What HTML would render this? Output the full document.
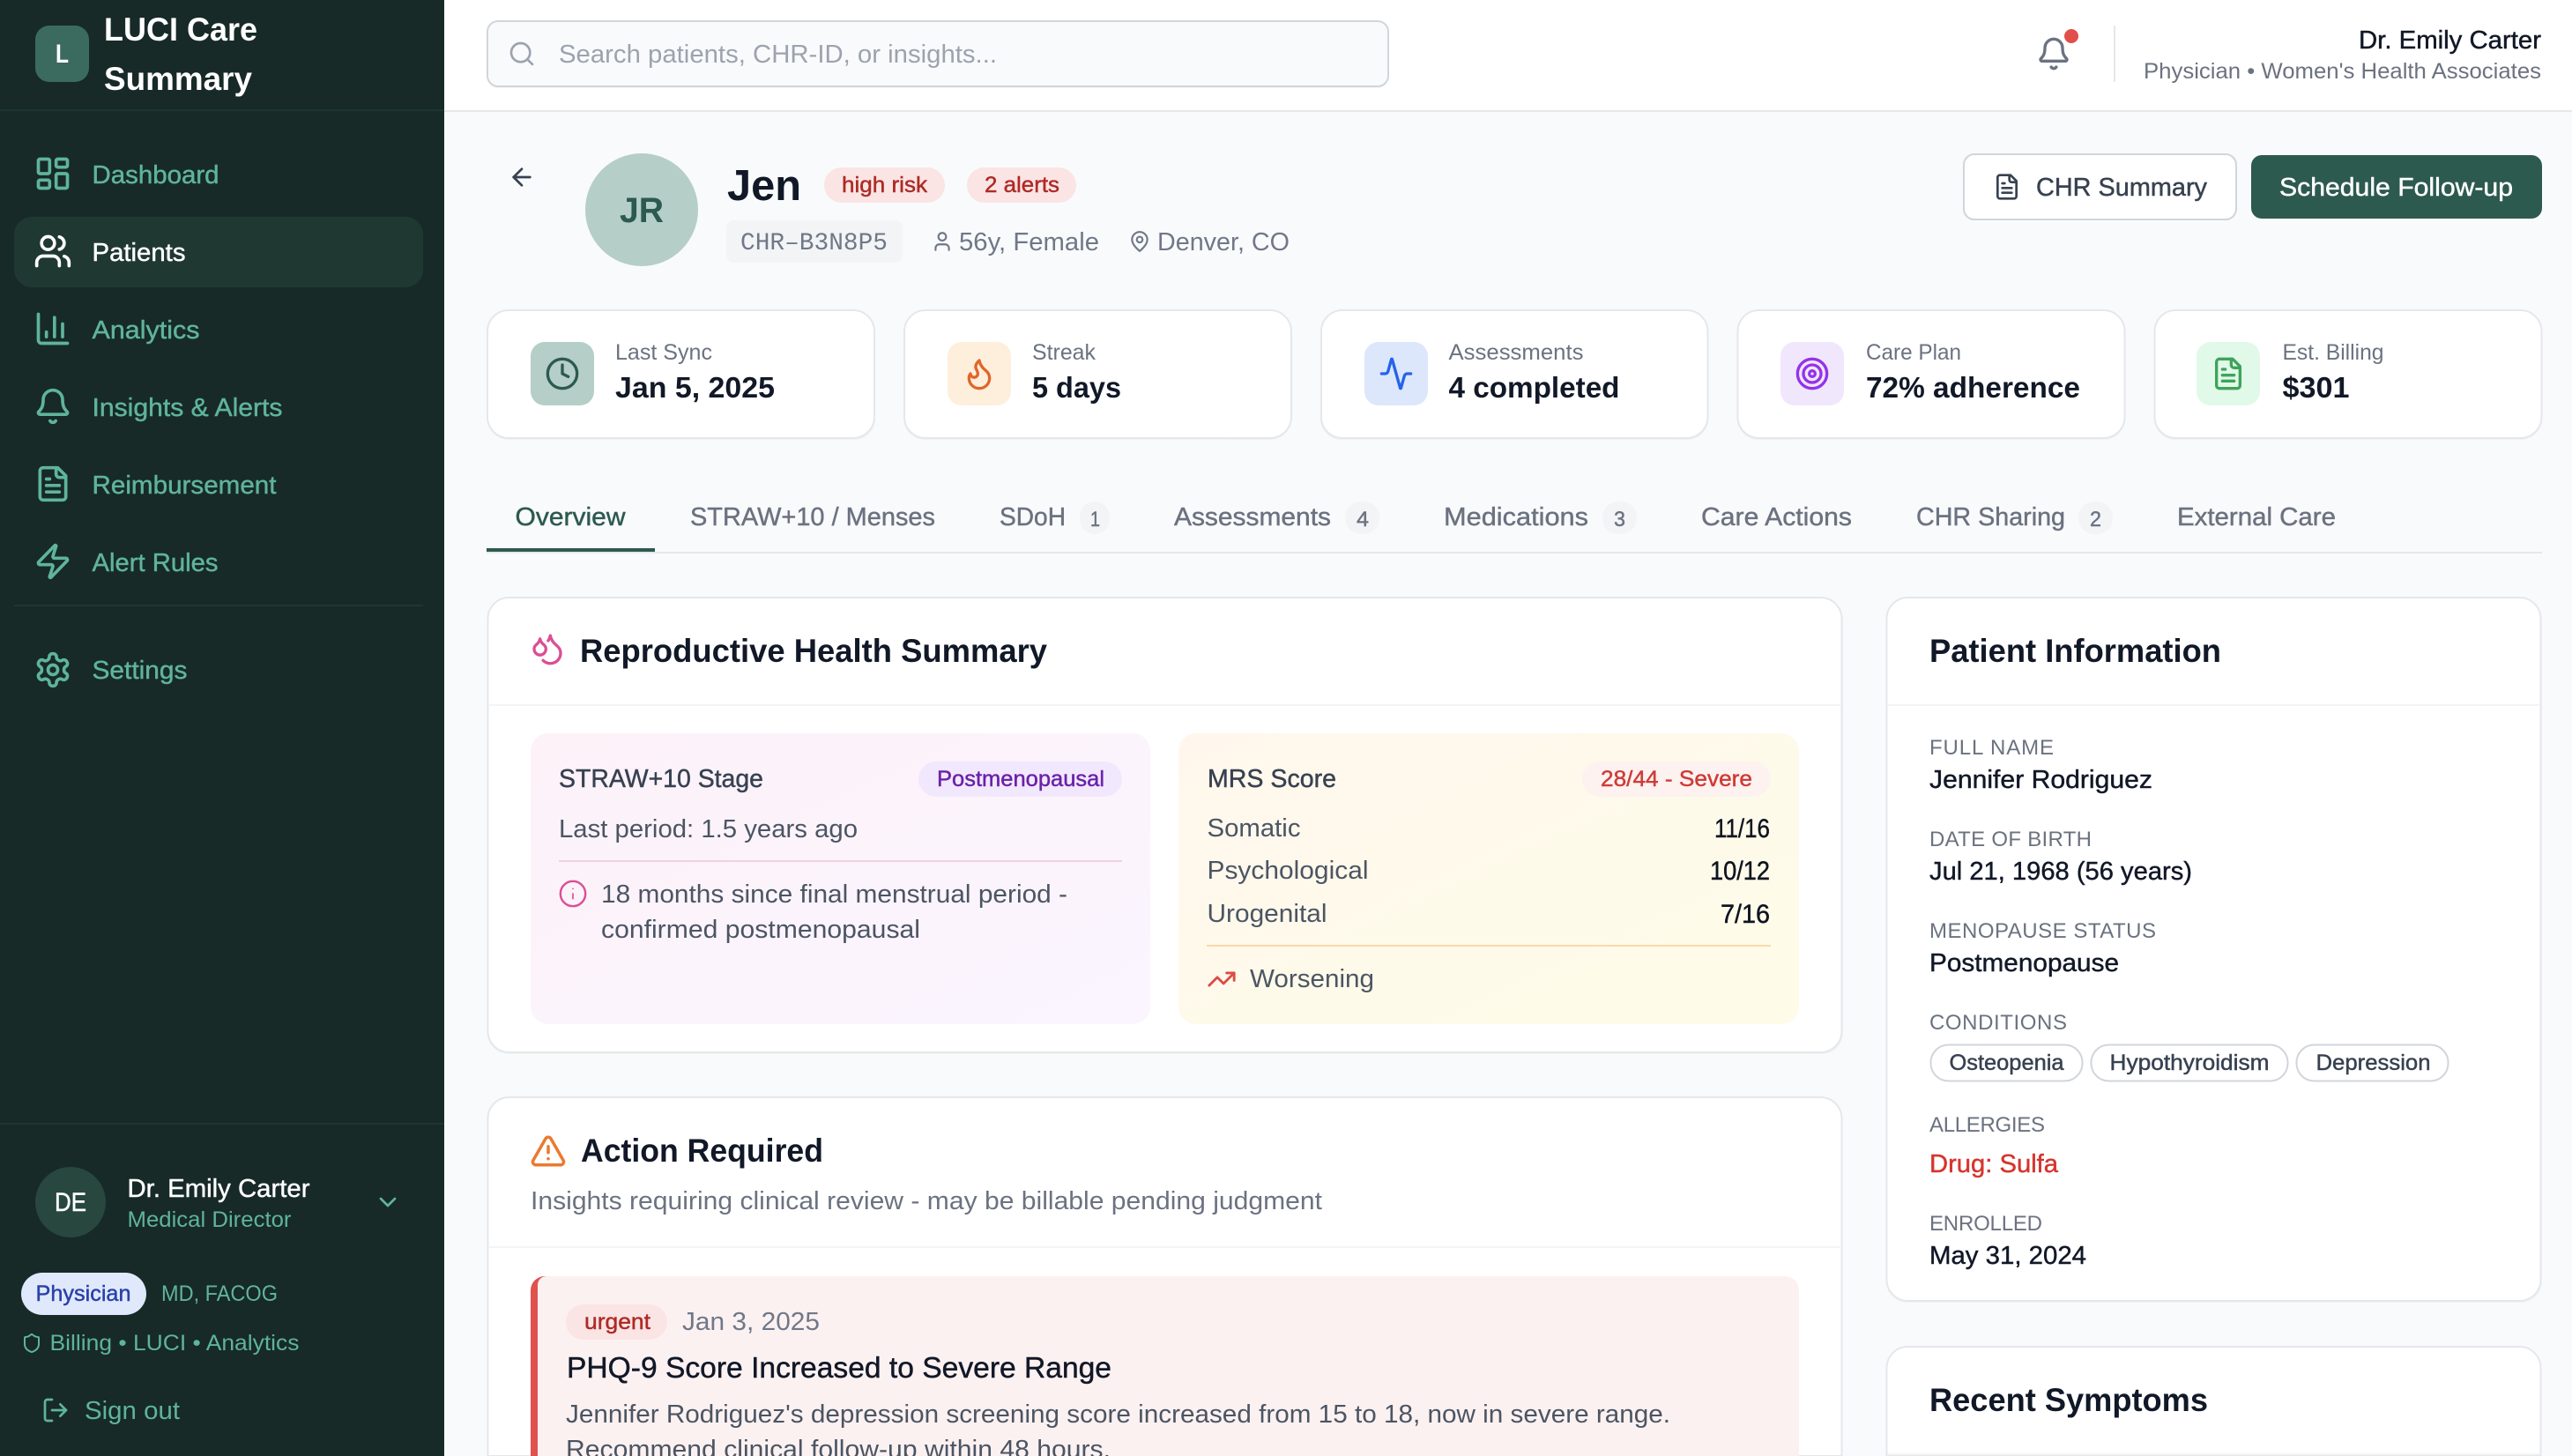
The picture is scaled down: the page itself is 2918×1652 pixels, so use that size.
<!DOCTYPE html>
<html lang="en"><head><meta charset="utf-8"><title>LUCI Care Summary</title>
<style>
html,body{margin:0;padding:0;width:2918px;height:1652px;overflow:hidden;background:#F9FAFB}
svg{display:block}
text{font-family:"Liberation Sans",Arial,sans-serif;fill:currentColor;white-space:pre}
text.mono{font-family:"Liberation Mono",monospace}
.m{stroke:currentColor;stroke-width:.45}
.b{font-weight:700}
.i{fill:none;stroke-width:2;stroke-linecap:round;stroke-linejoin:round}
</style></head><body>
<svg xmlns="http://www.w3.org/2000/svg" width="2918" height="1652" viewBox="0 0 2918 1652">
<defs>
<linearGradient id="gp" x1="0" y1="0" x2="1" y2="1"><stop offset="0" stop-color="#FDF2F8"/><stop offset="1" stop-color="#FAF5FF"/></linearGradient>
<linearGradient id="gy" x1="0" y1="0" x2="1" y2="1"><stop offset="0" stop-color="#FFF7ED"/><stop offset="1" stop-color="#FEFCE8"/></linearGradient>
</defs>
<rect width="2918" height="1652" fill="#F9FAFB"/>

<!-- Top bar -->
<rect x="504" width="2414" height="125" fill="#fff"/>
<rect x="504" y="125" width="2414" height="2" fill="#E5E7EB"/>
<rect x="553" y="26" width="1022" height="74" rx="12" fill="#000" opacity=".03"/>
<rect x="553" y="24" width="1022" height="74" rx="12" fill="#F9FAFB" stroke="#D1D5DB" stroke-width="2"/>
<g class="i" stroke="#9CA3AF" transform="translate(576,45) scale(1.333) "><circle cx="11" cy="11" r="8"/><path d="m21 21-4.3-4.3"/></g>
<text x="634" y="71" font-size="29" textLength="497" lengthAdjust="spacingAndGlyphs" color="#9CA3AF">Search patients, CHR-ID, or insights...</text>
<g class="i" stroke="#6B7280" stroke-width="2" transform="translate(2310,41) scale(1.667)"><path d="M10.268 21a2 2 0 0 0 3.464 0"/><path d="M3.262 15.326A1 1 0 0 0 4 17h16a1 1 0 0 0 .74-1.673C19.41 13.956 18 12.499 18 8A6 6 0 0 0 6 8c0 4.499-1.411 5.956-2.738 7.326"/></g>
<circle cx="2350" cy="41" r="8" fill="#E04F4A"/>
<rect x="2398" y="29" width="2" height="64" fill="#E5E7EB"/>
<text class="m" x="2676" y="55" font-size="29" textLength="207" lengthAdjust="spacingAndGlyphs" color="#111827">Dr. Emily Carter</text>
<text x="2432" y="89" font-size="25" textLength="451" lengthAdjust="spacingAndGlyphs" color="#6B7280">Physician • Women's Health Associates</text>

<!-- Sidebar -->
<rect width="504" height="1652" fill="#172A27"/>
<rect y="124" width="504" height="2" fill="#1F3630"/>
<rect x="40" y="29" width="61" height="64" rx="16" fill="#3B6B5E"/>
<text class="b" x="63" y="71" font-size="30" textLength="15" lengthAdjust="spacingAndGlyphs" color="#fff">L</text>
<text class="b" x="118" y="46" font-size="37" textLength="174" lengthAdjust="spacingAndGlyphs" color="#fff">LUCI Care</text>
<text class="b" x="118" y="102" font-size="37" textLength="168" lengthAdjust="spacingAndGlyphs" color="#fff">Summary</text>

<rect x="16" y="246" width="464" height="80" rx="20" fill="#203832"/>
<g class="i" stroke="#5FB49A" stroke-width="1.8" transform="translate(38,175) scale(1.833)"><rect x="3" y="3" width="7" height="9" rx="1"/><rect x="14" y="3" width="7" height="5" rx="1"/><rect x="14" y="12" width="7" height="9" rx="1"/><rect x="3" y="16" width="7" height="5" rx="1"/></g>
<text class="m" x="104.500" y="208" font-size="29" textLength="144" lengthAdjust="spacingAndGlyphs" color="#5FB49A">Dashboard</text>
<g class="i" stroke="#fff" stroke-width="1.8" transform="translate(38,263) scale(1.833)"><path d="M16 21v-2a4 4 0 0 0-4-4H6a4 4 0 0 0-4 4v2"/><circle cx="9" cy="7" r="4"/><path d="M22 21v-2a4 4 0 0 0-3-3.87"/><path d="M16 3.13a4 4 0 0 1 0 7.75"/></g>
<text class="m" x="104.500" y="296" font-size="29" textLength="106" lengthAdjust="spacingAndGlyphs" color="#fff">Patients</text>
<g class="i" stroke="#5FB49A" stroke-width="1.8" transform="translate(38,351) scale(1.833)"><path d="M3 3v16a2 2 0 0 0 2 2h16"/><path d="M18 17V9"/><path d="M13 17V5"/><path d="M8 17v-3"/></g>
<text class="m" x="104.500" y="384" font-size="29" textLength="122" lengthAdjust="spacingAndGlyphs" color="#5FB49A">Analytics</text>
<g class="i" stroke="#5FB49A" stroke-width="1.8" transform="translate(38,439) scale(1.833)"><path d="M10.268 21a2 2 0 0 0 3.464 0"/><path d="M3.262 15.326A1 1 0 0 0 4 17h16a1 1 0 0 0 .74-1.673C19.41 13.956 18 12.499 18 8A6 6 0 0 0 6 8c0 4.499-1.411 5.956-2.738 7.326"/></g>
<text class="m" x="104.500" y="472" font-size="29" textLength="216" lengthAdjust="spacingAndGlyphs" color="#5FB49A">Insights &amp; Alerts</text>
<g class="i" stroke="#5FB49A" stroke-width="1.8" transform="translate(38,527) scale(1.833)"><path d="M15 2H6a2 2 0 0 0-2 2v16a2 2 0 0 0 2 2h12a2 2 0 0 0 2-2V7Z"/><path d="M14 2v4a2 2 0 0 0 2 2h4"/><path d="M10 9H8"/><path d="M16 13H8"/><path d="M16 17H8"/></g>
<text class="m" x="104.500" y="560" font-size="29" textLength="209" lengthAdjust="spacingAndGlyphs" color="#5FB49A">Reimbursement</text>
<g class="i" stroke="#5FB49A" stroke-width="1.8" transform="translate(38,615) scale(1.833)"><path d="M4 14a1 1 0 0 1-.78-1.63l9.9-10.2a.5.5 0 0 1 .86.46l-1.92 6.02A1 1 0 0 0 13 10h7a1 1 0 0 1 .78 1.63l-9.9 10.2a.5.5 0 0 1-.86-.46l1.92-6.02A1 1 0 0 0 11 14z"/></g>
<text class="m" x="104.500" y="648" font-size="29" textLength="143" lengthAdjust="spacingAndGlyphs" color="#5FB49A">Alert Rules</text>
<rect x="16" y="686" width="464" height="2" fill="#1F3630"/>
<g class="i" stroke="#5FB49A" stroke-width="1.8" transform="translate(38,738) scale(1.833)"><path d="M12.22 2h-.44a2 2 0 0 0-2 2v.18a2 2 0 0 1-1 1.73l-.43.25a2 2 0 0 1-2 0l-.15-.08a2 2 0 0 0-2.73.73l-.22.38a2 2 0 0 0 .73 2.73l.15.1a2 2 0 0 1 1 1.72v.51a2 2 0 0 1-1 1.74l-.15.09a2 2 0 0 0-.73 2.73l.22.38a2 2 0 0 0 2.73.73l.15-.08a2 2 0 0 1 2 0l.43.25a2 2 0 0 1 1 1.73V20a2 2 0 0 0 2 2h.44a2 2 0 0 0 2-2v-.18a2 2 0 0 1 1-1.73l.43-.25a2 2 0 0 1 2 0l.15.08a2 2 0 0 0 2.73-.73l.22-.39a2 2 0 0 0-.73-2.73l-.15-.08a2 2 0 0 1-1-1.74v-.5a2 2 0 0 1 1-1.74l.15-.09a2 2 0 0 0 .73-2.73l-.22-.38a2 2 0 0 0-2.73-.73l-.15.08a2 2 0 0 1-2 0l-.43-.25a2 2 0 0 1-1-1.73V4a2 2 0 0 0-2-2z"/><circle cx="12" cy="12" r="3"/></g>
<text class="m" x="104.500" y="770" font-size="29" textLength="108" lengthAdjust="spacingAndGlyphs" color="#5FB49A">Settings</text>

<rect y="1274" width="504" height="2" fill="#1F3630"/>
<circle cx="80" cy="1364" r="40" fill="#27473F"/>
<text class="m" x="62" y="1374" font-size="30" textLength="36" lengthAdjust="spacingAndGlyphs" color="#fff">DE</text>
<text class="m" x="144.500" y="1358" font-size="29" textLength="207" lengthAdjust="spacingAndGlyphs" color="#fff">Dr. Emily Carter</text>
<text x="144.500" y="1392" font-size="25" textLength="186" lengthAdjust="spacingAndGlyphs" color="#5FB49A">Medical Director</text>
<g class="i" stroke="#5FB49A" transform="translate(424,1348) scale(1.333)"><path d="m6 9 6 6 6-6"/></g>
<rect x="24" y="1444" width="142" height="48" rx="24" fill="#DFE9FB"/>
<text class="m" x="40.500" y="1476" font-size="25" textLength="108" lengthAdjust="spacingAndGlyphs" color="#2A40A8">Physician</text>
<text x="183" y="1476" font-size="25" textLength="132" lengthAdjust="spacingAndGlyphs" color="#5FB49A">MD, FACOG</text>
<g class="i" stroke="#5FB49A" transform="translate(24,1512) scale(1)"><path d="M20 13c0 5-3.5 7.5-7.66 8.95a1 1 0 0 1-.67-.01C7.5 20.5 4 18 4 13V6a1 1 0 0 1 1-1c2 0 4.5-1.2 6.24-2.72a1.17 1.17 0 0 1 1.52 0C14.51 3.81 17 5 19 5a1 1 0 0 1 1 1z"/></g>
<text x="56.500" y="1532" font-size="25" textLength="283" lengthAdjust="spacingAndGlyphs" color="#5FB49A">Billing • LUCI • Analytics</text>
<g class="i" stroke="#5FB49A" transform="translate(47,1584) scale(1.333)"><path d="M9 21H5a2 2 0 0 1-2-2V5a2 2 0 0 1 2-2h4"/><path d="m16 17 5-5-5-5"/><path d="M21 12H9"/></g>
<text x="96" y="1610" font-size="29" textLength="108" lengthAdjust="spacingAndGlyphs" color="#5FB49A">Sign out</text>

<!-- Patient header -->
<g class="i" stroke="#374151" transform="translate(576,185) scale(1.333)"><path d="m12 19-7-7 7-7"/><path d="M19 12H5"/></g>
<circle cx="728" cy="238" r="64" fill="#B5CEC8"/>
<text class="b" x="703" y="252" font-size="40" textLength="50" lengthAdjust="spacingAndGlyphs" color="#2D5A4E">JR</text>
<text class="b" x="825" y="227" font-size="49" textLength="84" lengthAdjust="spacingAndGlyphs" color="#111827">Jen</text>
<rect x="935" y="190" width="137" height="40" rx="20" fill="#FAE4E4"/>
<text class="m" x="955" y="218" font-size="25" textLength="97" lengthAdjust="spacingAndGlyphs" color="#AE2A25">high risk</text>
<rect x="1097" y="190" width="124" height="40" rx="20" fill="#FAE4E4"/>
<text class="m" x="1117" y="218" font-size="25" textLength="85" lengthAdjust="spacingAndGlyphs" color="#AE2A25">2 alerts</text>
<rect x="824" y="250" width="200" height="48" rx="8" fill="#F3F4F6"/>
<text class="mono" x="840" y="283" font-size="28" textLength="167" lengthAdjust="spacingAndGlyphs" color="#6F7888">CHR–B3N8P5</text>
<g class="i" stroke="#6F7888" transform="translate(1056,261) scale(1.083)"><path d="M19 21v-2a4 4 0 0 0-4-4H9a4 4 0 0 0-4 4v2"/><circle cx="12" cy="7" r="4"/></g>
<text x="1088" y="284" font-size="29" textLength="159" lengthAdjust="spacingAndGlyphs" color="#6F7888">56y, Female</text>
<g class="i" stroke="#6F7888" transform="translate(1280,261) scale(1.083)"><path d="M20 10c0 6-8 12-8 12s-8-6-8-12a8 8 0 0 1 16 0Z"/><circle cx="12" cy="10" r="3"/></g>
<text x="1313" y="284" font-size="29" textLength="150" lengthAdjust="spacingAndGlyphs" color="#6F7888">Denver, CO</text>

<rect x="2228" y="175" width="309" height="74" rx="12" fill="#fff" stroke="#D1D5DB" stroke-width="2"/>
<g class="i" stroke="#374151" transform="translate(2261,196) scale(1.333)"><path d="M15 2H6a2 2 0 0 0-2 2v16a2 2 0 0 0 2 2h12a2 2 0 0 0 2-2V7Z"/><path d="M14 2v4a2 2 0 0 0 2 2h4"/><path d="M10 9H8"/><path d="M16 13H8"/><path d="M16 17H8"/></g>
<text class="m" x="2310" y="222" font-size="29" textLength="194" lengthAdjust="spacingAndGlyphs" color="#374151">CHR Summary</text>
<rect x="2554" y="176" width="330" height="72" rx="12" fill="#2D5A4E"/>
<text class="m" x="2586" y="222" font-size="29" textLength="265" lengthAdjust="spacingAndGlyphs" color="#fff">Schedule Follow-up</text>

<!-- Stat cards -->
<g fill="#000" opacity=".035"><rect x="553" y="354" width="440" height="145" rx="24"/><rect x="1025" y="354" width="440" height="145" rx="24"/><rect x="1498" y="354" width="440" height="145" rx="24"/><rect x="1971" y="354" width="440" height="145" rx="24"/><rect x="2444" y="354" width="440" height="145" rx="24"/></g>
<g fill="#fff" stroke="#E5E7EB" stroke-width="2"><rect x="553" y="352" width="439" height="145" rx="24"/><rect x="1026" y="352" width="439" height="145" rx="24"/><rect x="1499" y="352" width="438.500" height="145" rx="24"/><rect x="1971.500" y="352" width="439" height="145" rx="24"/><rect x="2444.500" y="352" width="439" height="145" rx="24"/></g>
<rect x="602" y="388" width="72" height="72" rx="16" fill="#B5CEC8"/>
<g class="i" stroke="#2D5A4E" transform="translate(618,404) scale(1.667)"><circle cx="12" cy="12" r="10"/><polyline points="12 6 12 12 16 14"/></g>
<text x="698" y="408" font-size="25" textLength="110" lengthAdjust="spacingAndGlyphs" color="#6B7280">Last Sync</text>
<text class="b" x="698" y="451" font-size="33" textLength="181" lengthAdjust="spacingAndGlyphs" color="#111827">Jan 5, 2025</text>
<rect x="1075" y="388" width="72" height="72" rx="16" fill="#FDEFDC"/>
<g class="i" stroke="#E0662A" transform="translate(1091,404) scale(1.667)"><path d="M8.5 14.5A2.5 2.5 0 0 0 11 12c0-1.38-.5-2-1-3-1.072-2.143-.224-4.054 2-6 .5 2.5 2 4.9 4 6.5 2 1.6 3 3.5 3 5.5a7 7 0 1 1-14 0c0-1.153.433-2.294 1-3a2.5 2.5 0 0 0 2.5 2.5z"/></g>
<text x="1171" y="408" font-size="25" textLength="72" lengthAdjust="spacingAndGlyphs" color="#6B7280">Streak</text>
<text class="b" x="1171" y="451" font-size="33" textLength="101" lengthAdjust="spacingAndGlyphs" color="#111827">5 days</text>
<rect x="1548" y="388" width="72" height="72" rx="16" fill="#DCE7FC"/>
<g class="i" stroke="#2563EB" transform="translate(1564,404) scale(1.667)"><path d="M22 12h-2.48a2 2 0 0 0-1.93 1.46l-2.35 8.36a.25.25 0 0 1-.48 0L9.24 2.18a.25.25 0 0 0-.48 0l-2.35 8.36A2 2 0 0 1 4.49 12H2"/></g>
<text x="1643.500" y="408" font-size="25" textLength="153" lengthAdjust="spacingAndGlyphs" color="#6B7280">Assessments</text>
<text class="b" x="1643.500" y="451" font-size="33" textLength="194" lengthAdjust="spacingAndGlyphs" color="#111827">4 completed</text>
<rect x="2020" y="388" width="72" height="72" rx="16" fill="#F1E7FD"/>
<g class="i" stroke="#9333EA" transform="translate(2036,404) scale(1.667)"><circle cx="12" cy="12" r="10"/><circle cx="12" cy="12" r="6"/><circle cx="12" cy="12" r="2"/></g>
<text x="2117" y="408" font-size="25" textLength="108" lengthAdjust="spacingAndGlyphs" color="#6B7280">Care Plan</text>
<text class="b" x="2117" y="451" font-size="33" textLength="243" lengthAdjust="spacingAndGlyphs" color="#111827">72% adherence</text>
<rect x="2492" y="388" width="72" height="72" rx="16" fill="#E1F9E9"/>
<g class="i" stroke="#3FA35A" transform="translate(2508,404) scale(1.667)"><path d="M15 2H6a2 2 0 0 0-2 2v16a2 2 0 0 0 2 2h12a2 2 0 0 0 2-2V7Z"/><path d="M14 2v4a2 2 0 0 0 2 2h4"/><path d="M10 9H8"/><path d="M16 13H8"/><path d="M16 17H8"/></g>
<text x="2589.500" y="408" font-size="25" textLength="115" lengthAdjust="spacingAndGlyphs" color="#6B7280">Est. Billing</text>
<text class="b" x="2589.500" y="451" font-size="33" textLength="76" lengthAdjust="spacingAndGlyphs" color="#111827">$301</text>

<!-- Tabs -->
<rect x="552" y="626" width="2332" height="2" fill="#E5E7EB"/>
<rect x="552" y="622" width="191" height="4" fill="#2D5A4E"/>
<text class="m" x="584.500" y="596" font-size="29" textLength="125" lengthAdjust="spacingAndGlyphs" color="#2D5A4E">Overview</text>
<text class="m" x="783" y="596" font-size="29" textLength="278" lengthAdjust="spacingAndGlyphs" color="#6B7280">STRAW+10 / Menses</text>
<text class="m" x="1134" y="596" font-size="29" textLength="75" lengthAdjust="spacingAndGlyphs" color="#6B7280">SDoH</text>
<rect x="1225" y="569" width="34" height="37" rx="17" fill="#F3F4F6"/>
<text class="m" x="1237" y="597" font-size="24" textLength="11" lengthAdjust="spacingAndGlyphs" color="#6B7280">1</text>
<text class="m" x="1332" y="596" font-size="29" textLength="178" lengthAdjust="spacingAndGlyphs" color="#6B7280">Assessments</text>
<rect x="1526" y="569" width="39" height="37" rx="18" fill="#F3F4F6"/>
<text class="m" x="1539" y="597" font-size="24" textLength="14" lengthAdjust="spacingAndGlyphs" color="#6B7280">4</text>
<text class="m" x="1638" y="596" font-size="29" textLength="164" lengthAdjust="spacingAndGlyphs" color="#6B7280">Medications</text>
<rect x="1818" y="569" width="39" height="37" rx="18" fill="#F3F4F6"/>
<text class="m" x="1831" y="597" font-size="24" textLength="13" lengthAdjust="spacingAndGlyphs" color="#6B7280">3</text>
<text class="m" x="1930" y="596" font-size="29" textLength="171" lengthAdjust="spacingAndGlyphs" color="#6B7280">Care Actions</text>
<text class="m" x="2174" y="596" font-size="29" textLength="169" lengthAdjust="spacingAndGlyphs" color="#6B7280">CHR Sharing</text>
<rect x="2358" y="569" width="39" height="37" rx="18" fill="#F3F4F6"/>
<text class="m" x="2371" y="597" font-size="24" textLength="13" lengthAdjust="spacingAndGlyphs" color="#6B7280">2</text>
<text class="m" x="2470" y="596" font-size="29" textLength="180" lengthAdjust="spacingAndGlyphs" color="#6B7280">External Care</text>

<!-- Reproductive Health Summary -->
<rect x="553" y="680" width="1538" height="516" rx="24" fill="#000" opacity=".03"/>
<rect x="553.500" y="678" width="1536" height="516" rx="24" fill="#fff" stroke="#E5E7EB" stroke-width="2"/>
<rect x="555" y="799" width="1534" height="2" fill="#F3F4F6"/>
<g class="i" stroke="#DB4F93" stroke-width="2" transform="translate(601,716) scale(1.667)"><path d="M7 16.3c2.2 0 4-1.83 4-4.05 0-1.16-.57-2.26-1.71-3.19S7.29 6.75 7 5.3c-.29 1.45-1.14 2.84-2.29 3.76S3 11.1 3 12.25c0 2.22 1.8 4.05 4 4.05z"/><path d="M12.56 6.6A10.97 10.97 0 0 0 14 3.02c.5 2.5 2 4.9 4 6.5s3 3.5 3 5.5a6.98 6.98 0 0 1-11.91 4.97"/></g>
<text class="b" x="658" y="751" font-size="37" textLength="530" lengthAdjust="spacingAndGlyphs" color="#111827">Reproductive Health Summary</text>

<rect x="602" y="832" width="703" height="330" rx="20" fill="url(#gp)"/>
<text class="m" x="634" y="893" font-size="29" textLength="232" lengthAdjust="spacingAndGlyphs" color="#374151">STRAW+10 Stage</text>
<rect x="1042" y="864" width="231" height="40" rx="20" fill="#F1E8FD"/>
<text class="m" x="1063" y="892" font-size="25" textLength="190" lengthAdjust="spacingAndGlyphs" color="#6B21A8">Postmenopausal</text>
<text x="634" y="950" font-size="29" textLength="339" lengthAdjust="spacingAndGlyphs" color="#4B5563">Last period: 1.5 years ago</text>
<rect x="634" y="976" width="639" height="2" fill="#F3D0E3"/>
<g class="i" stroke="#DB4F93" transform="translate(633,997) scale(1.417)"><circle cx="12" cy="12" r="10" stroke-width="1.7"/><path d="M12 16v-4" stroke-width="1.2"/><path d="M12 8h.01" stroke-width="1.2"/></g>
<text x="682" y="1024" font-size="29" textLength="529" lengthAdjust="spacingAndGlyphs" color="#4B5563">18 months since final menstrual period -</text>
<text x="682" y="1064" font-size="29" textLength="362" lengthAdjust="spacingAndGlyphs" color="#4B5563">confirmed postmenopausal</text>

<rect x="1337" y="832" width="704" height="330" rx="20" fill="url(#gy)"/>
<text class="m" x="1370" y="893" font-size="29" textLength="146" lengthAdjust="spacingAndGlyphs" color="#374151">MRS Score</text>
<rect x="1795" y="864" width="214" height="40" rx="20" fill="#FDF2F0"/>
<text class="m" x="1816" y="892" font-size="25" textLength="172" lengthAdjust="spacingAndGlyphs" color="#CF3B36">28/44 - Severe</text>
<text x="1369.500" y="949" font-size="29" textLength="106" lengthAdjust="spacingAndGlyphs" color="#4B5563">Somatic</text>
<text class="m" x="1945" y="950" font-size="30" textLength="63" lengthAdjust="spacingAndGlyphs" color="#0F1420">11/16</text>
<text x="1369.500" y="997" font-size="29" textLength="183" lengthAdjust="spacingAndGlyphs" color="#4B5563">Psychological</text>
<text class="m" x="1940" y="998" font-size="30" textLength="68" lengthAdjust="spacingAndGlyphs" color="#0F1420">10/12</text>
<text x="1369.500" y="1046" font-size="29" textLength="136" lengthAdjust="spacingAndGlyphs" color="#4B5563">Urogenital</text>
<text class="m" x="1952" y="1047" font-size="30" textLength="56" lengthAdjust="spacingAndGlyphs" color="#0F1420">7/16</text>
<rect x="1369" y="1072" width="640" height="2" fill="#F9D9A8"/>
<g class="i" stroke="#DC4B46" transform="translate(1369,1094) scale(1.417)"><path d="M22 7 13.5 15.5 8.5 10.5 2 17"/><path d="M16 7h6v6"/></g>
<text x="1418" y="1120" font-size="29" textLength="141" lengthAdjust="spacingAndGlyphs" color="#4B5563">Worsening</text>

<!-- Action Required -->
<path d="M553.500 1652V1269a24 24 0 0 1 24-24H2065.500a24 24 0 0 1 24 24V1652Z" fill="#fff" stroke="#E5E7EB" stroke-width="2"/>
<rect x="555" y="1414" width="1534" height="2" fill="#F3F4F6"/>
<g class="i" stroke="#EA7A2F" transform="translate(601,1285) scale(1.75)" stroke-width="1.9"><path d="m21.73 18-8-14a2 2 0 0 0-3.48 0l-8 14A2 2 0 0 0 4 21h16a2 2 0 0 0 1.73-3"/><path d="M12 9v4"/><path d="M12 17h.01"/></g>
<text class="b" x="659" y="1318" font-size="37" textLength="275" lengthAdjust="spacingAndGlyphs" color="#111827">Action Required</text>
<text x="602" y="1372" font-size="29" textLength="898" lengthAdjust="spacingAndGlyphs" color="#6B7280">Insights requiring clinical review - may be billable pending judgment</text>
<path d="M602 1652V1464a16 16 0 0 1 16-16h24V1652Z" fill="#DF524E"/>
<path d="M610 1652V1458a10 10 0 0 1 10-10H2025a16 16 0 0 1 16 16V1652Z" fill="#FCF1F1"/>
<rect x="642" y="1480" width="115" height="40" rx="20" fill="#FAE4E4"/>
<text class="m" x="663" y="1508" font-size="25" textLength="75" lengthAdjust="spacingAndGlyphs" color="#AE2A25">urgent</text>
<text x="774" y="1509" font-size="29" textLength="156" lengthAdjust="spacingAndGlyphs" color="#6F7888">Jan 3, 2025</text>
<text class="m" x="643" y="1563" font-size="33" textLength="618" lengthAdjust="spacingAndGlyphs" color="#111827">PHQ-9 Score Increased to Severe Range</text>
<text x="642" y="1614" font-size="29" textLength="1253" lengthAdjust="spacingAndGlyphs" color="#4B5563">Jennifer Rodriguez's depression screening score increased from 15 to 18, now in severe range.</text>
<text x="642" y="1654" font-size="29" textLength="618" lengthAdjust="spacingAndGlyphs" color="#4B5563">Recommend clinical follow-up within 48 hours.</text>

<!-- Patient Information -->
<rect x="2140" y="680" width="744" height="798" rx="24" fill="#000" opacity=".03"/>
<rect x="2140.500" y="678" width="742" height="798" rx="24" fill="#fff" stroke="#E5E7EB" stroke-width="2"/>
<rect x="2142" y="799" width="740" height="2" fill="#F3F4F6"/>
<text class="b" x="2189" y="751" font-size="37" textLength="331" lengthAdjust="spacingAndGlyphs" color="#111827">Patient Information</text>
<text x="2189" y="856" font-size="24" textLength="141" lengthAdjust="spacing" color="#6B7280">FULL NAME</text>
<text class="m" x="2189" y="894" font-size="29" textLength="253" lengthAdjust="spacingAndGlyphs" color="#111827">Jennifer Rodriguez</text>
<text x="2189" y="960" font-size="24" textLength="184" lengthAdjust="spacing" color="#6B7280">DATE OF BIRTH</text>
<text class="m" x="2189" y="998" font-size="29" textLength="298" lengthAdjust="spacingAndGlyphs" color="#111827">Jul 21, 1968 (56 years)</text>
<text x="2189" y="1064" font-size="24" textLength="257" lengthAdjust="spacing" color="#6B7280">MENOPAUSE STATUS</text>
<text class="m" x="2189" y="1102" font-size="29" textLength="215" lengthAdjust="spacingAndGlyphs" color="#111827">Postmenopause</text>
<text x="2189" y="1168" font-size="24" textLength="156" lengthAdjust="spacing" color="#6B7280">CONDITIONS</text>
<g fill="#fff" stroke="#D1D5DB" stroke-width="2"><rect x="2190.500" y="1185.500" width="172" height="41" rx="20"/><rect x="2372.500" y="1185.500" width="223" height="41" rx="20"/><rect x="2605.500" y="1185.500" width="172" height="41" rx="20"/></g>
<text class="m" x="2211.500" y="1214" font-size="25" textLength="130" lengthAdjust="spacingAndGlyphs" color="#374151">Osteopenia</text>
<text class="m" x="2393.500" y="1214" font-size="25" textLength="181" lengthAdjust="spacingAndGlyphs" color="#374151">Hypothyroidism</text>
<text class="m" x="2627.500" y="1214" font-size="25" textLength="130" lengthAdjust="spacingAndGlyphs" color="#374151">Depression</text>
<text x="2189" y="1284" font-size="24" textLength="131" lengthAdjust="spacing" color="#6B7280">ALLERGIES</text>
<text class="m" x="2189" y="1330" font-size="29" textLength="146" lengthAdjust="spacingAndGlyphs" color="#D6352E">Drug: Sulfa</text>
<text x="2189" y="1396" font-size="24" textLength="128" lengthAdjust="spacing" color="#6B7280">ENROLLED</text>
<text class="m" x="2189" y="1434" font-size="29" textLength="178" lengthAdjust="spacingAndGlyphs" color="#111827">May 31, 2024</text>

<!-- Recent Symptoms -->
<path d="M2140.500 1652V1552a24 24 0 0 1 24-24H2858.500a24 24 0 0 1 24 24V1652Z" fill="#fff" stroke="#E5E7EB" stroke-width="2"/>
<rect x="2142" y="1649" width="740" height="2" fill="#F3F4F6"/>
<text class="b" x="2189" y="1601" font-size="37" textLength="316" lengthAdjust="spacingAndGlyphs" color="#111827">Recent Symptoms</text>
</svg>
</body></html>
